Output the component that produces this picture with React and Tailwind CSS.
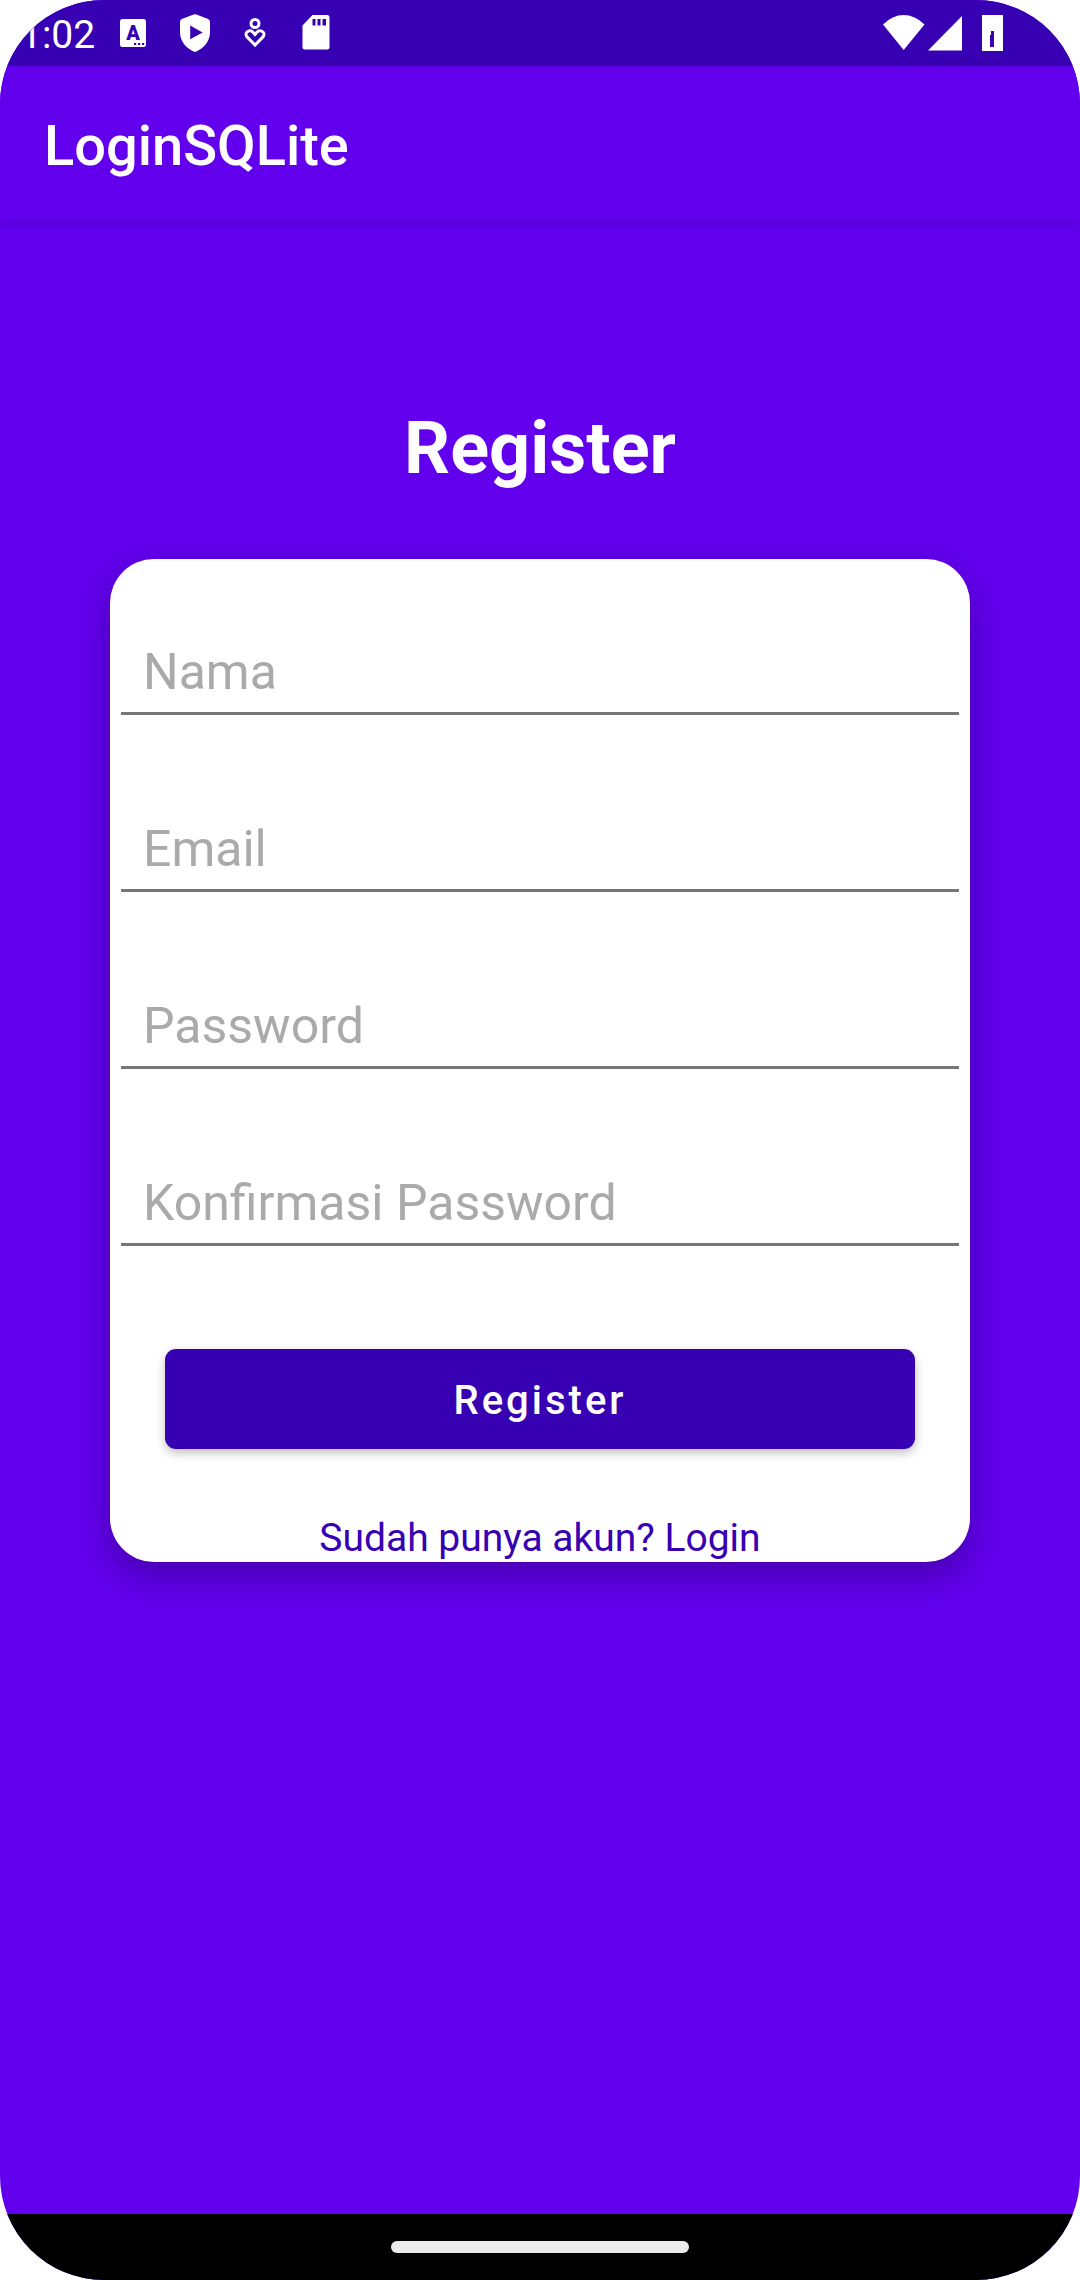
const FIELDS = [
  { id: "nama", label: "Nama", type: "text" },
  { id: "email", label: "Email", type: "email" },
  { id: "password", label: "Password", type: "password" },
  { id: "konfirmasi", label: "Konfirmasi Password", type: "password" },
];

function KeyboardIcon() {
  return (
    <svg width="26" height="28" viewBox="0 0 26 28" aria-hidden="true">
      <rect width="26" height="28" rx="2.5" fill="#fff" />
      <text x="13" y="21" textAnchor="middle" fontSize="20" className="fill-[#3700b3] font-[Roboto] font-black">A</text>
      <path d="M14 24h2.2v2H14zM18 24h2.2v2H18zM22 24h2.2v2H22z" fill="#3700b3" />
    </svg>
  );
}

function ShieldIcon() {
  return (
    <svg width="32" height="38" viewBox="0 0 32 38" aria-hidden="true">
      <path
        fill="#fff"
        fillRule="evenodd"
        d="M14.6.4Q16 0 17.4.4L29.2 5Q31 5.9 31 8v10.5c0 8.500-6 15.700-13.600 18.900q-1.400.6-2.800 0C7 34.200 1 27 1 18.500V8Q1 5.900 2.800 5zM11.200 11.600v13.700L23.600 18.500z"
      />
    </svg>
  );
}

function HeartPersonIcon() {
  return (
    <svg width="22" height="30" viewBox="0 0 22 30" fill="none" stroke="#fff" strokeWidth="3" aria-hidden="true">
      <circle cx="11" cy="5.500" r="4" />
      <path d="M11 27l-7.500-7.600C1.500 17.300 1.600 15.300 3 14c2-1.900 4.600-1.400 6 .2l2 2.300 2-2.300c1.400-1.600 4-2.100 6-.2 1.400 1.300 1.500 3.300-.5 5.400z" />
    </svg>
  );
}

function SdCardIcon() {
  return (
    <svg width="31" height="36" viewBox="-3 0 31 36" aria-hidden="true">
      <path
        fill="#fff"
        fillRule="evenodd"
        d="M10.500 0H25q2.500 0 2.500 2.500V32q0 2.500-2.500 2.500H3Q.5 34.500.5 32V10.500zM10.500 4v6.500h3V4zM15.500 4v6.500h3V4zM20.500 4v6.500h3.500V4z"
      />
    </svg>
  );
}

function WifiIcon() {
  return (
    <svg width="42" height="36" viewBox="0 0 42 36" aria-hidden="true">
      <path fill="#fff" d="M0 9.500Q9.500 0 20.700 0T41.500 9.500L20.700 35z" />
    </svg>
  );
}

function SignalIcon() {
  return (
    <svg width="34" height="35" viewBox="0 0 34 35" aria-hidden="true">
      <path fill="#fff" d="M34 0v34.500H0z" />
    </svg>
  );
}

function BatteryIcon() {
  return (
    <svg width="21" height="36" viewBox="0 0 21 36" aria-hidden="true">
      <path fill="#fff" fillRule="evenodd" d="M0 0h21v36H0zM9 16v4H8v12h4V16z" />
    </svg>
  );
}

function StatusBar() {
  return (
    <div className="flex h-[66px] items-center justify-between bg-[#3700b3] pr-[77px] pl-5 text-white">
      <div className="flex items-center">
        <span className="w-[100px] pt-[3px] text-[39px] leading-[46px]">1:02</span>
        <div className="flex items-center gap-[33px]">
          <KeyboardIcon />
          <ShieldIcon />
          <HeartPersonIcon />
          <SdCardIcon />
        </div>
      </div>
      <div className="flex items-center">
        <WifiIcon />
        <div className="ml-[3px]">
          <SignalIcon />
        </div>
        <div className="ml-5">
          <BatteryIcon />
        </div>
      </div>
    </div>
  );
}

export default function App() {
  return (
    <div className="min-h-screen bg-white">
      <div className="flex min-h-screen flex-col overflow-hidden rounded-[104px] bg-[#6200ee] font-[Roboto,sans-serif]">
        <StatusBar />
        <header className="flex h-[154px] items-center bg-[#6200ee] px-11 pt-1.5 shadow-[0_4px_12px_rgba(0,0,0,0.12)]">
          <h1 className="text-[56px] leading-[68px] font-medium text-white">LoginSQLite</h1>
        </header>

        <main className="flex-1 px-[110px] pt-[187px]">
          <h2 className="text-center text-[72px] leading-[84px] font-bold text-white">Register</h2>

          <form
            className="mt-[68px] rounded-[44px] bg-white pt-[55px] shadow-[0_14px_36px_rgba(0,0,0,0.28)]"
            onSubmit={(event) => event.preventDefault()}
          >
            <div className="flex flex-col gap-[76px] px-[11px]">
              {FIELDS.map((field) => (
                <input
                  key={field.id}
                  id={field.id}
                  name={field.id}
                  type={field.type}
                  placeholder={field.label}
                  aria-label={field.label}
                  className="h-[101px] w-full border-b-[3px] border-[#777777] bg-transparent px-[22px] pt-[18px] text-[50px] text-black outline-none placeholder:text-[#aaaaaa]"
                />
              ))}
            </div>

            <div className="mt-[103px] px-[55px]">
              <button
                type="submit"
                className="h-[100px] w-full rounded-[11px] bg-[#3700b3] pt-1 text-[40px] font-medium tracking-[3px] text-white shadow-[0_4px_10px_rgba(0,0,0,0.25)]"
              >
                Register
              </button>
            </div>

            <p className="mt-[66px] pb-px text-center text-[39px] leading-[46px]">
              <a href="#login" className="text-[#3700b3]">
                Sudah punya akun? Login
              </a>
            </p>
          </form>
        </main>

        <div className="flex h-[66px] items-center justify-center bg-black">
          <div className="h-3 w-[298px] rounded-full bg-[#ebebeb]" />
        </div>
      </div>
    </div>
  );
}
